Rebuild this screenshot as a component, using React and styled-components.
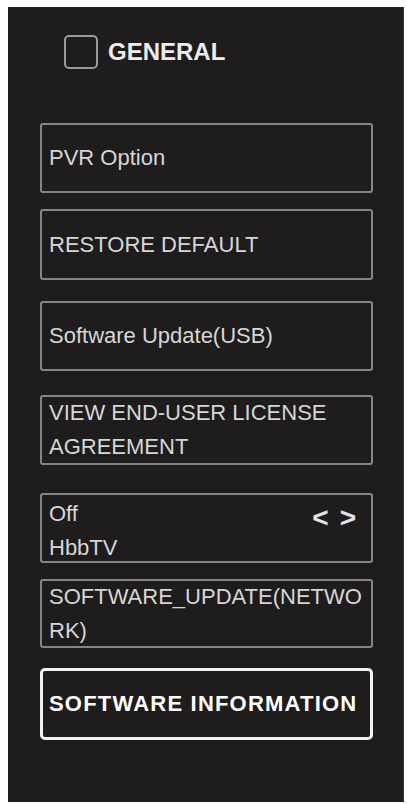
import React from "react";
import styled, { createGlobalStyle } from "styled-components";

const Global = createGlobalStyle`
  html, body { margin: 0; padding: 0; background: #ffffff; }
  body { font-family: "Liberation Sans", Arial, sans-serif; }
`;

const Panel = styled.div`
  margin: 7px 0 0 8px;
  width: 396px;
  height: 795px;
  background: #1f1c1d;
  box-sizing: border-box;
  padding-top: 28px;
  border-right: 1px solid #3a3839;
`;

const Header = styled.div`
  display: flex;
  align-items: center;
  gap: 10px;
  padding-left: 56px;
  height: 34px;
`;

const Check = styled.div`
  width: 34px;
  height: 34px;
  box-sizing: border-box;
  border: 2px solid #9a9a9a;
  border-radius: 5px;
`;

const Title = styled.div`
  color: #ededed;
  font-weight: bold;
  font-size: 24px;
  line-height: 34px;
`;

const List = styled.div`
  display: flex;
  flex-direction: column;
  margin-top: 54px;
  padding-left: 32px;
  width: 333px;
`;

const Item = styled.div`
  box-sizing: border-box;
  height: ${(p) => p.$h || 70}px;
  margin-top: ${(p) => p.$mt || 0}px;
  border: ${(p) => (p.$active ? "3px solid #f2f2f2" : "2px solid #858585")};
  border-radius: ${(p) => (p.$active ? 5 : 3)}px;
  padding: 0 8px 0 ${(p) => (p.$active ? 6 : 7)}px;
  display: flex;
  flex-direction: column;
  justify-content: ${(p) => p.$justify || "center"};
  color: ${(p) => (p.$active ? "#ffffff" : "#d6d6d6")};
  font-size: 22px;
  line-height: 34px;
  overflow-wrap: anywhere;
`;

const Bold = styled.span`
  font-weight: bold;
  letter-spacing: 1.2px;
`;

const OptionRow = styled.div`
  display: flex;
  align-items: center;
  justify-content: space-between;
  line-height: 30px;
`;

const Arrows = styled.div`
  display: flex;
  gap: 11px;
  font-weight: bold;
  font-size: 28px;
  color: #e4e4e4;
  margin-top: 8px;
  padding-right: 7px;
`;

const Label = styled.div`
  line-height: 30px;
`;

export default function App() {
  return (
    <>
      <Global />
      <Panel>
        <Header>
          <Check />
          <Title>GENERAL</Title>
        </Header>
        <List>
          <Item $h={70}>PVR Option</Item>
          <Item $h={71} $mt={16}>RESTORE DEFAULT</Item>
          <Item $h={70} $mt={21}>Software Update(USB)</Item>
          <Item $h={70} $mt={24}>VIEW END-USER LICENSE AGREEMENT</Item>
          <Item $h={70} $mt={28} $justify="space-between">
            <OptionRow>
              <span>Off</span>
              <Arrows>
                <span>&lt;</span>
                <span>&gt;</span>
              </Arrows>
            </OptionRow>
            <Label>HbbTV</Label>
          </Item>
          <Item $h={69} $mt={16}>SOFTWARE_UPDATE(NETWORK)</Item>
          <Item $h={72} $mt={20} $active>
            <Bold>SOFTWARE INFORMATION</Bold>
          </Item>
        </List>
      </Panel>
    </>
  );
}
